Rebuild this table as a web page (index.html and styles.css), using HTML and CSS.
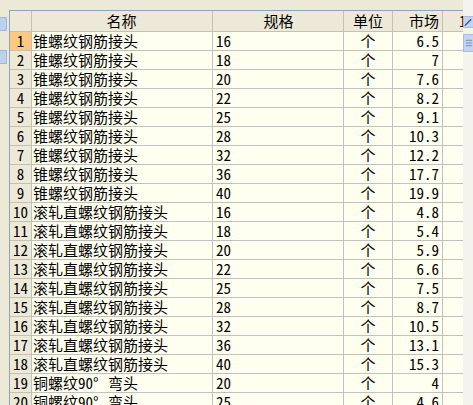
FILE: index.html
```html
<!DOCTYPE html>
<html>
<head>
<meta charset="utf-8">
<link rel="stylesheet" href="styles.css">
</head>
<body>
<div class="frame">
  <div class="side side-left">
    <div class="btn btn-a"></div>
    <div class="btn btn-b"></div>
  </div>
  <div class="grid-wrap">
    <div class="row head">
      <div class="c num"></div><div class="c name ctr">名称</div><div class="c spec ctr">规格</div><div class="c unit ctr">单位</div><div class="c mkt ctr">市场</div><div class="c extra">1</div>
    </div>
    <div class="row"><div class="c num sel">1</div><div class="c name">锥螺纹钢筋接头</div><div class="c spec">16</div><div class="c unit ctr">个</div><div class="c mkt">6.5</div><div class="c extra"></div></div>
    <div class="row"><div class="c num">2</div><div class="c name">锥螺纹钢筋接头</div><div class="c spec">18</div><div class="c unit ctr">个</div><div class="c mkt">7</div><div class="c extra"></div></div>
    <div class="row"><div class="c num">3</div><div class="c name">锥螺纹钢筋接头</div><div class="c spec">20</div><div class="c unit ctr">个</div><div class="c mkt">7.6</div><div class="c extra"></div></div>
    <div class="row"><div class="c num">4</div><div class="c name">锥螺纹钢筋接头</div><div class="c spec">22</div><div class="c unit ctr">个</div><div class="c mkt">8.2</div><div class="c extra"></div></div>
    <div class="row"><div class="c num">5</div><div class="c name">锥螺纹钢筋接头</div><div class="c spec">25</div><div class="c unit ctr">个</div><div class="c mkt">9.1</div><div class="c extra"></div></div>
    <div class="row"><div class="c num">6</div><div class="c name">锥螺纹钢筋接头</div><div class="c spec">28</div><div class="c unit ctr">个</div><div class="c mkt">10.3</div><div class="c extra"></div></div>
    <div class="row"><div class="c num">7</div><div class="c name">锥螺纹钢筋接头</div><div class="c spec">32</div><div class="c unit ctr">个</div><div class="c mkt">12.2</div><div class="c extra"></div></div>
    <div class="row"><div class="c num">8</div><div class="c name">锥螺纹钢筋接头</div><div class="c spec">36</div><div class="c unit ctr">个</div><div class="c mkt">17.7</div><div class="c extra"></div></div>
    <div class="row"><div class="c num">9</div><div class="c name">锥螺纹钢筋接头</div><div class="c spec">40</div><div class="c unit ctr">个</div><div class="c mkt">19.9</div><div class="c extra"></div></div>
    <div class="row"><div class="c num">10</div><div class="c name">滚轧直螺纹钢筋接头</div><div class="c spec">16</div><div class="c unit ctr">个</div><div class="c mkt">4.8</div><div class="c extra"></div></div>
    <div class="row"><div class="c num">11</div><div class="c name">滚轧直螺纹钢筋接头</div><div class="c spec">18</div><div class="c unit ctr">个</div><div class="c mkt">5.4</div><div class="c extra"></div></div>
    <div class="row"><div class="c num">12</div><div class="c name">滚轧直螺纹钢筋接头</div><div class="c spec">20</div><div class="c unit ctr">个</div><div class="c mkt">5.9</div><div class="c extra"></div></div>
    <div class="row"><div class="c num">13</div><div class="c name">滚轧直螺纹钢筋接头</div><div class="c spec">22</div><div class="c unit ctr">个</div><div class="c mkt">6.6</div><div class="c extra"></div></div>
    <div class="row"><div class="c num">14</div><div class="c name">滚轧直螺纹钢筋接头</div><div class="c spec">25</div><div class="c unit ctr">个</div><div class="c mkt">7.5</div><div class="c extra"></div></div>
    <div class="row"><div class="c num">15</div><div class="c name">滚轧直螺纹钢筋接头</div><div class="c spec">28</div><div class="c unit ctr">个</div><div class="c mkt">8.7</div><div class="c extra"></div></div>
    <div class="row"><div class="c num">16</div><div class="c name">滚轧直螺纹钢筋接头</div><div class="c spec">32</div><div class="c unit ctr">个</div><div class="c mkt">10.5</div><div class="c extra"></div></div>
    <div class="row"><div class="c num">17</div><div class="c name">滚轧直螺纹钢筋接头</div><div class="c spec">36</div><div class="c unit ctr">个</div><div class="c mkt">13.1</div><div class="c extra"></div></div>
    <div class="row"><div class="c num">18</div><div class="c name">滚轧直螺纹钢筋接头</div><div class="c spec">40</div><div class="c unit ctr">个</div><div class="c mkt">15.3</div><div class="c extra"></div></div>
    <div class="row"><div class="c num">19</div><div class="c name">铜螺纹90<span class="deg">°</span>弯头</div><div class="c spec">20</div><div class="c unit ctr">个</div><div class="c mkt">4</div><div class="c extra"></div></div>
    <div class="row"><div class="c num">20</div><div class="c name">铜螺纹90<span class="deg">°</span>弯头</div><div class="c spec">25</div><div class="c unit ctr">个</div><div class="c mkt">4.6</div><div class="c extra"></div></div>
  </div>
  <div class="side side-right">
    <div class="rbtn rbtn-a">
      <svg width="10" height="10" viewBox="0 0 10 10"><path d="M1 9 L8 2" stroke="#2a4f8f" stroke-width="1.4"/></svg>
    </div>
    <div class="rbtn rbtn-b">
      <svg width="10" height="14" viewBox="0 0 10 14"><path d="M2 4H9M2 7H9M2 10H9" stroke="#6d88b8" stroke-width="1"/></svg>
    </div>
  </div>
</div>
</body>
</html>
```

FILE: styles.css
```css
html, body {
  margin: 0;
  padding: 0;
  background: #ece9d8;
  overflow: hidden;
}
.frame {
  display: flex;
  width: 473px;
  height: 405px;
  font-family: "Noto Sans Mono CJK SC", "Noto Sans CJK SC", monospace;
  font-size: 15px;
  color: #000;
}
.side-left {
  width: 9px;
  flex: none;
  display: flex;
  flex-direction: column;
}
.btn {
  width: 7px;
  background: #bcd0f0;
  border: 1px solid #9fb6de;
  border-left: none;
  box-sizing: border-box;
}
.btn-a { margin-top: 17px; height: 14px; }
.btn-b { margin-top: 19px; height: 14px; }
.grid-wrap {
  width: 454px;
  flex: none;
  margin-top: 10px;
  border-top: 1px solid #8fa4b8;
  border-left: 1px solid #8fa4b8;
  box-sizing: border-box;
  overflow: hidden;
  background: #fffff0;
}
.row {
  display: grid;
  grid-template-columns: 22px 181px 131px 49px 50px 60px;
  height: 19px;
  line-height: 18px;
}
.row.head {
  height: 21px;
  line-height: 20px;
}
.c {
  box-sizing: border-box;
  border-right: 1px solid #c0c0c0;
  border-bottom: 1px solid #c0c0c0;
  white-space: nowrap;
  padding: 0 2px;
  background: #fffff0;
}
.head .c {
  background: #ece9d8;
  border-color: #c4c1b0;
}
.num {
  background: #ece9d8;
  text-align: center;
  padding: 0;
  border-color: #c4c1b0;
}
.num.sel {
  background: #fdc980;
}
.name { padding-left: 1px; }
.spec { padding-left: 3px; }
.ctr { text-align: center; }
.mkt { text-align: right; padding-right: 3px; }
.head .extra { padding-left: 16px; }
.deg {
  display: inline-block;
  width: 15px;
}
.side-right {
  width: 10px;
  flex: none;
  background: #f4f3ee;
  display: flex;
  flex-direction: column;
  align-items: flex-end;
}
.rbtn {
  width: 10px;
  background: #c3d5f2;
  border: 1px solid #a7bde2;
  border-right: none;
  box-sizing: border-box;
  display: flex;
  align-items: center;
  justify-content: center;
}
.rbtn-a { margin-top: 16px; height: 12px; }
.rbtn-b { margin-top: 6px; height: 18px; }
```
